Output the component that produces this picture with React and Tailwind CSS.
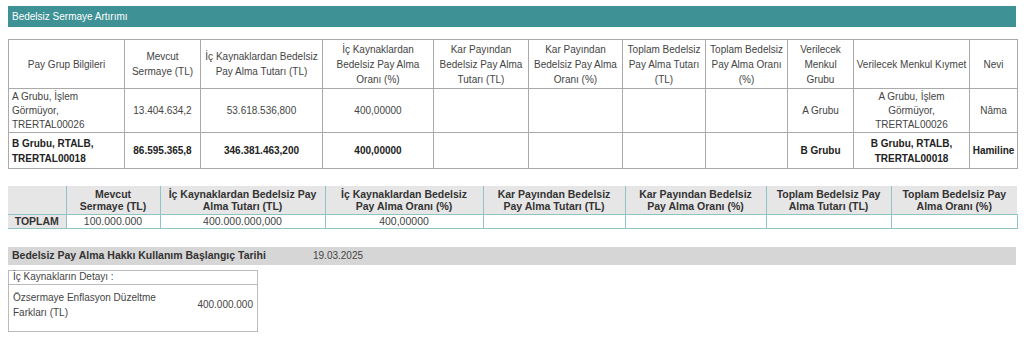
import React from "react";

const t1Cols = [116, 76, 122, 111, 95, 94, 83, 82, 66, 116, 48];
const t2Cols = [58, 94, 165, 158, 142, 141, 125, 126];

const t1Head = [
  "Pay Grup Bilgileri",
  "Mevcut Sermaye (TL)",
  "İç Kaynaklardan Bedelsiz Pay Alma Tutarı (TL)",
  "İç Kaynaklardan Bedelsiz Pay Alma Oranı (%)",
  "Kar Payından Bedelsiz Pay Alma Tutarı (TL)",
  "Kar Payından Bedelsiz Pay Alma Oranı (%)",
  "Toplam Bedelsiz Pay Alma Tutarı (TL)",
  "Toplam Bedelsiz Pay Alma Oranı (%)",
  "Verilecek Menkul Grubu",
  "Verilecek Menkul Kıymet",
  "Nevi",
];

const t2Head = [
  "",
  "Mevcut Sermaye (TL)",
  "İç Kaynaklardan Bedelsiz Pay Alma Tutarı (TL)",
  "İç Kaynaklardan Bedelsiz Pay Alma Oranı (%)",
  "Kar Payından Bedelsiz Pay Alma Tutarı (TL)",
  "Kar Payından Bedelsiz Pay Alma Oranı (%)",
  "Toplam Bedelsiz Pay Alma Tutarı (TL)",
  "Toplam Bedelsiz Pay Alma Oranı (%)",
];

const rowA = [
  { v: "A Grubu, İşlem Görmüyor, TRERTAL00026", left: true },
  { v: "13.404.634,2" },
  { v: "53.618.536,800" },
  { v: "400,00000" },
  { v: "" },
  { v: "" },
  { v: "" },
  { v: "" },
  { v: "A Grubu" },
  { v: "A Grubu, İşlem Görmüyor, TRERTAL00026" },
  { v: "Nâma" },
];

const rowB = [
  { v: "B Grubu, RTALB, TRERTAL00018", left: true },
  { v: "86.595.365,8" },
  { v: "346.381.463,200" },
  { v: "400,00000" },
  { v: "" },
  { v: "" },
  { v: "" },
  { v: "" },
  { v: "B Grubu" },
  { v: "B Grubu, RTALB, TRERTAL00018" },
  { v: "Hamiline" },
];

export default function App() {
  return (
    <div
      className="w-[1024px] h-[338px] bg-white px-[8px] pt-[6px] text-[10px] text-[#444]"
      style={{ fontFamily: '"Liberation Sans", Arial, sans-serif' }}
    >
      <div className="h-[21px] bg-[#3e9296] text-white flex items-center pl-[4px] text-[10px]">
        Bedelsiz Sermaye Artırımı
      </div>

      <table className="mt-[12px] w-[1009px] table-fixed border-collapse border border-[#aaa]">
        <colgroup>
          {t1Cols.map((w, i) => (
            <col key={i} style={{ width: w }} />
          ))}
        </colgroup>
        <thead>
          <tr className="h-[49px]">
            {t1Head.map((h, i) => (
              <th
                key={i}
                className="border border-[#aaa] font-normal text-center align-middle px-[2px] leading-[15px]"
              >
                {h}
              </th>
            ))}
          </tr>
        </thead>
        <tbody>
          <tr className="h-[44px]">
            {rowA.map((c, i) => (
              <td
                key={i}
                className={`border border-[#aaa] align-middle leading-[14px] ${
                  c.left ? "text-left px-[3px]" : "text-center px-[2px]"
                }`}
              >
                {c.v}
              </td>
            ))}
          </tr>
          <tr className="h-[36px]">
            {rowB.map((c, i) => (
              <td
                key={i}
                className={`border border-[#aaa] align-middle leading-[15px] font-bold text-[#222] ${
                  c.left ? "text-left px-[3px]" : "text-center px-[2px]"
                }`}
              >
                {c.v}
              </td>
            ))}
          </tr>
        </tbody>
      </table>

      <table className="mt-[17px] w-[1009px] table-fixed border-collapse border-b border-[#8fc3c5]">
        <colgroup>
          {t2Cols.map((w, i) => (
            <col key={i} style={{ width: w }} />
          ))}
        </colgroup>
        <thead>
          <tr className="h-[28px] bg-[#e6e6e6]">
            {t2Head.map((h, i) => (
              <th
                key={i}
                className="border-l border-b border-[#8fc3c5] first:border-l-0 font-bold text-[#333] text-center align-middle px-[6px] leading-[12px] text-[10.5px]"
              >
                {h}
              </th>
            ))}
          </tr>
        </thead>
        <tbody>
          <tr className="h-[14px]">
            <td className="bg-[#e6e6e6] font-bold text-[#333] text-center leading-[12px] px-[3px] text-[10.5px]">
              TOPLAM
            </td>
            <td className="border-l border-[#8fc3c5] text-center leading-[12px] text-[10.5px]">100.000.000</td>
            <td className="border-l border-[#8fc3c5] text-center leading-[12px] text-[10.5px]">400.000.000,000</td>
            <td className="border-l border-[#8fc3c5] text-center leading-[12px] text-[10.5px]">400,00000</td>
            <td className="border-l border-[#8fc3c5]"></td>
            <td className="border-l border-[#8fc3c5]"></td>
            <td className="border-l border-[#8fc3c5]"></td>
            <td className="border-l border-r border-[#8fc3c5]"></td>
          </tr>
        </tbody>
      </table>

      <div className="mt-[18px] h-[18px] bg-[#d6d6d6] flex items-center">
        <div className="w-[305px] pl-[4px] font-bold text-[#333] text-[10.5px]">
          Bedelsiz Pay Alma Hakkı Kullanım Başlangıç Tarihi
        </div>
        <div className="text-[#444]">19.03.2025</div>
      </div>

      <div className="mt-[5px] w-[250px] border border-[#bbb]">
        <div className="h-[14px] border-b border-[#bbb] px-[4px] flex items-center leading-[12px]">
          İç Kaynakların Detayı :
        </div>
        <div className="h-[46px] flex items-center justify-between px-[4px] pb-[6px]">
          <div className="w-[160px] leading-[15px]">Özsermaye Enflasyon Düzeltme Farkları (TL)</div>
          <div>400.000.000</div>
        </div>
      </div>
    </div>
  );
}
